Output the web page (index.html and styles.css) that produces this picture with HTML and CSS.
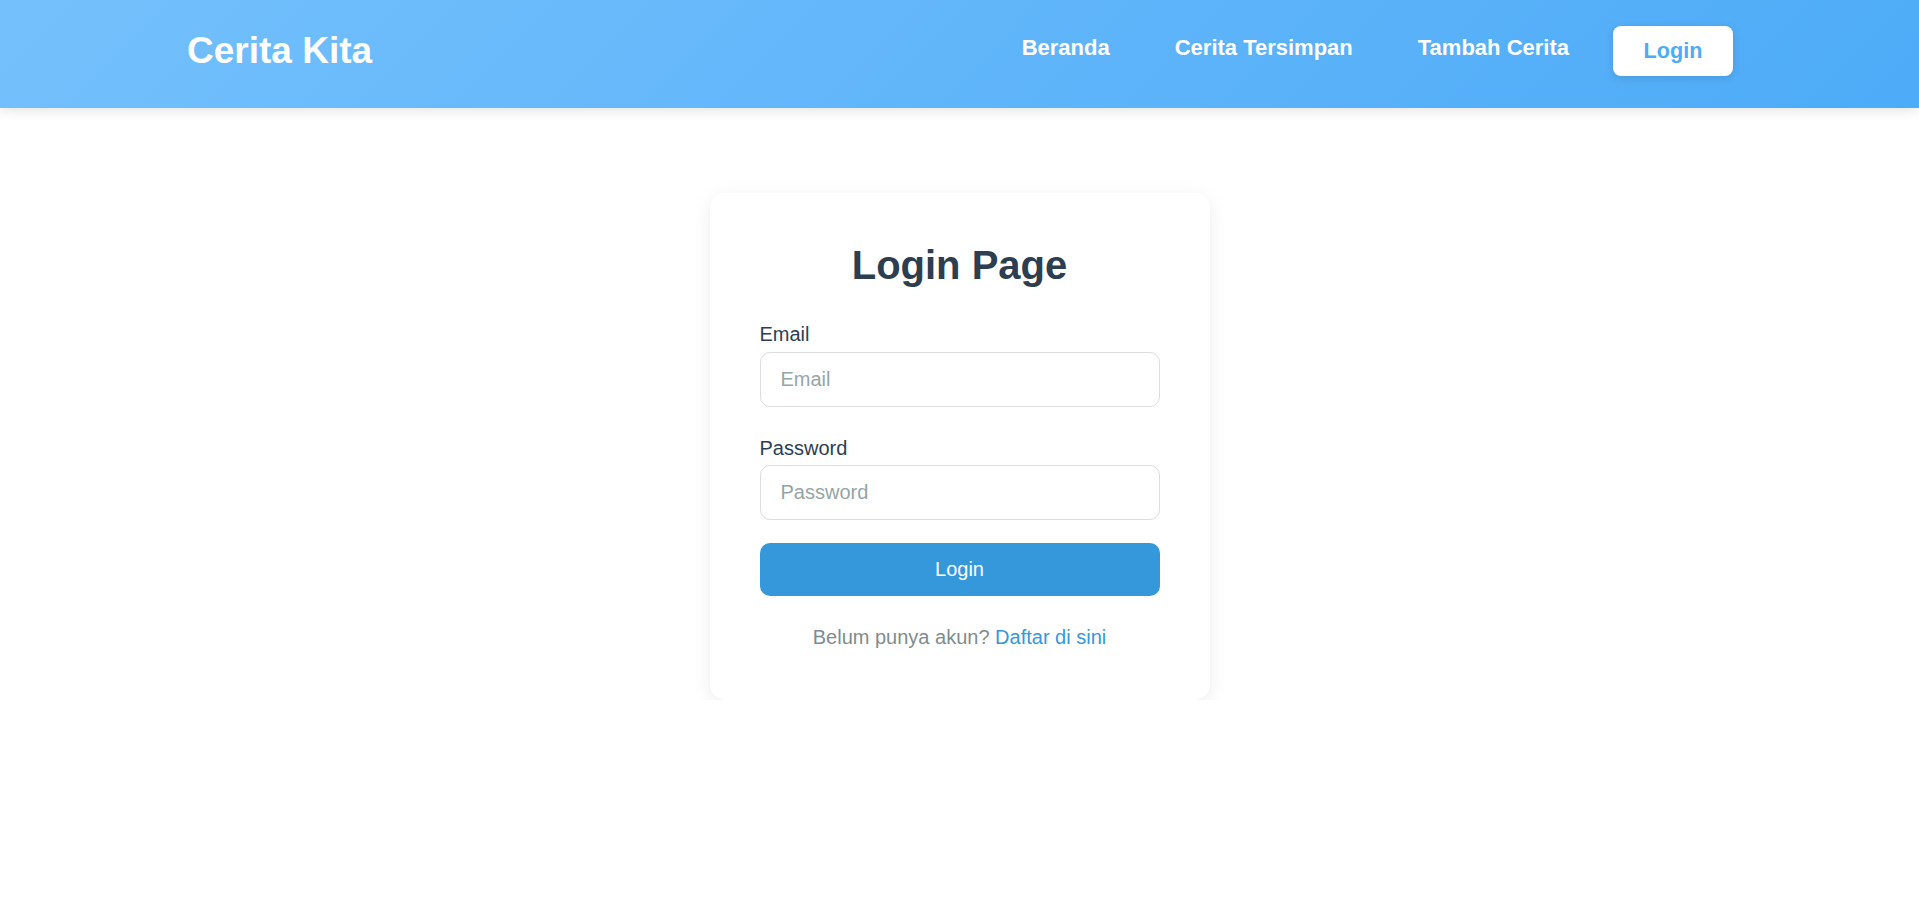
FILE: index.html
```html
<!DOCTYPE html>
<html lang="id">
<head>
<meta charset="utf-8">
<title>Cerita Kita - Login</title>
<link rel="stylesheet" href="styles.css">
</head>
<body>
<header class="app-bar">
  <div class="app-bar__inner">
    <a class="brand" href="#">Cerita Kita</a>
    <nav class="nav">
      <a class="nav__link" href="#">Beranda</a>
      <a class="nav__link" href="#">Cerita Tersimpan</a>
      <a class="nav__link" href="#">Tambah Cerita</a>
      <a class="nav__btn" href="#">Login</a>
    </nav>
  </div>
</header>
<main class="main">
  <section class="card">
    <h1 class="card__title">Login Page</h1>
    <form class="form">
      <div class="field">
        <label class="field__label" for="email">Email</label>
        <input class="field__input" id="email" type="email" placeholder="Email">
      </div>
      <div class="field">
        <label class="field__label" for="password">Password</label>
        <input class="field__input" id="password" type="password" placeholder="Password">
      </div>
      <button class="submit" type="button">Login</button>
    </form>
    <p class="card__footer">Belum punya akun? <a class="card__link" href="#">Daftar di sini</a></p>
  </section>
</main>
</body>
</html>
```
FILE: styles.css
```css
* { box-sizing: border-box; }
html, body { margin: 0; padding: 0; }
body {
  font-family: "Liberation Sans", Arial, sans-serif;
  background: #ffffff;
  color: #2c3e50;
}
.app-bar {
  height: 108px;
  padding-bottom: 6px;
  background: linear-gradient(135deg, #74c0fc 0%, #4dabf7 100%);
  box-shadow: 0 2px 12px rgba(0, 0, 0, 0.12);
  position: relative;
  z-index: 1;
}
.app-bar__inner {
  max-width: 1547px;
  height: 100%;
  margin: 0 auto;
  display: flex;
  align-items: center;
  justify-content: space-between;
}
.brand {
  color: #ffffff;
  text-decoration: none;
  font-weight: 700;
  font-size: 37px;
  padding-left: 1px;
}
.nav {
  display: flex;
  align-items: center;
  gap: 25px;
}
.nav__link {
  color: #ffffff;
  text-decoration: none;
  font-weight: 700;
  font-size: 22px;
  padding: 6px 20px;
  margin-bottom: 6px;
}
.nav__link:nth-child(3) { margin-right: -1px; }
.nav__btn {
  display: flex;
  align-items: center;
  justify-content: center;
  width: 120px;
  height: 50px;
  background: #ffffff;
  color: #4dabf7;
  text-decoration: none;
  font-weight: 700;
  font-size: 21.6px;
  border-radius: 8px;
  box-shadow: 0 2px 8px rgba(0, 0, 0, 0.12);
}
.main {
  display: flex;
  justify-content: center;
  padding-top: 85px;
}
.card {
  width: 500px;
  background: #ffffff;
  border-radius: 15px;
  padding: 49px 50px 51px;
  box-shadow: 0 5px 20px rgba(0, 0, 0, 0.08);
}
.card__title {
  margin: 0 0 35px;
  text-align: center;
  font-size: 40px;
  line-height: 46px;
  font-weight: 700;
  color: #2c3e50;
}
.form { display: flex; flex-direction: column; }
.field { margin-bottom: 30px; }
.field:nth-child(2) { margin-bottom: 23px; }
.field__label {
  display: block;
  font-size: 20px;
  line-height: 23px;
  color: #2c3e50;
  margin-bottom: 6px;
}
.field:nth-child(2) .field__label { margin-bottom: 5px; }
.field__input {
  display: block;
  width: 100%;
  height: 55px;
  padding: 0 20px;
  font-family: inherit;
  font-size: 20px;
  color: #2c3e50;
  border: 1px solid #dddddd;
  border-radius: 10px;
  outline: none;
  background: #ffffff;
}
.field__input::placeholder { color: #95a5a6; }
.submit {
  display: block;
  width: 100%;
  height: 53px;
  border: none;
  border-radius: 10px;
  background: #3498db;
  color: #ffffff;
  font-family: inherit;
  font-size: 20px;
  cursor: pointer;
}
.card__footer {
  margin: 30px 0 0;
  text-align: center;
  font-size: 20px;
  line-height: 23px;
  color: #7f8c8d;
}
.card__link { color: #3498db; text-decoration: none; }
```
